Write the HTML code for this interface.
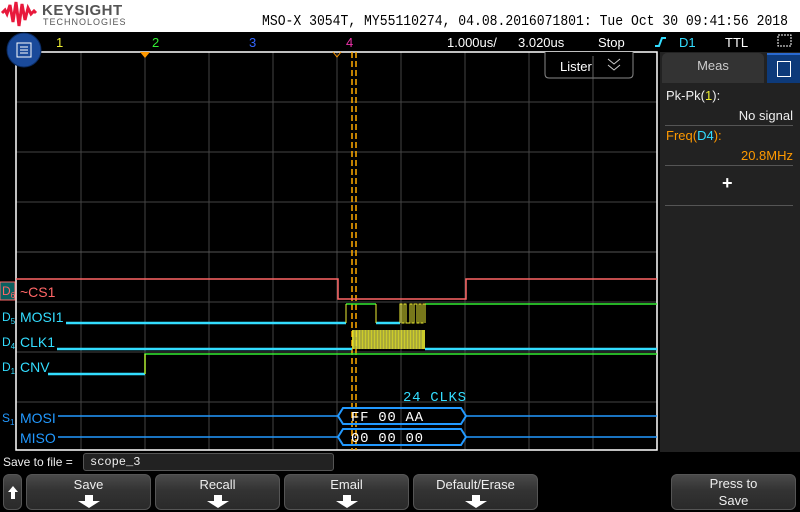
<!DOCTYPE html><html><head><style>
body{margin:0;width:800px;height:512px;background:#000;overflow:hidden;font-family:"Liberation Sans",sans-serif;position:relative}
.a{position:absolute}
.btn{position:absolute;top:474px;height:36px;background:linear-gradient(#4a4a4a,#333 45%,#2a2a2a);border:1px solid #555;border-radius:6px;box-sizing:border-box;color:#eee;font-size:13px;text-align:center;padding-top:2px}
.btn svg{position:absolute;left:50%;margin-left:-11px;top:20px}
</style></head><body>
<div class="a" style="left:0;top:0;width:800px;height:32px;background:#fff"></div>
<svg class="a" style="left:0;top:0" width="800" height="512">
<path d="M2,13 L5,10 L7,14 L10,5 L13,22 L16,2 L19,26 L22,4 L25,20 L28,8 L31,14 L34,11 L36,13" stroke="#e8193c" stroke-width="3" fill="none"/>
<text x="42" y="15" font-size="15" font-weight="bold" fill="#555" letter-spacing="0.5">KEYSIGHT</text>
<text x="43" y="25" font-size="9" fill="#555" letter-spacing="1">TECHNOLOGIES</text>
<text x="262" y="25" font-size="15" fill="#000" font-family="Liberation Mono" textLength="526" lengthAdjust="spacingAndGlyphs">MSO-X 3054T, MY55110274, 04.08.2016071801: Tue Oct 30 09:41:56 2018</text>
<text x="56" y="47" font-size="13" fill="#ee3">1</text>
<text x="152" y="47" font-size="13" fill="#3e3">2</text>
<text x="249" y="47" font-size="13" fill="#36f">3</text>
<text x="346" y="47" font-size="13" fill="#e3a">4</text>
<text x="447" y="47" font-size="13" fill="#fff">1.000us/</text>
<text x="518" y="47" font-size="13" fill="#fff">3.020us</text>
<text x="598" y="47" font-size="13" fill="#fff">Stop</text>
<path d="M655,46 h4 l3,-8 h4" stroke="#3df" stroke-width="2" fill="none"/>
<text x="679" y="47" font-size="13" fill="#3df">D1</text>
<text x="725" y="47" font-size="13" fill="#fff">TTL</text>
<rect x="778" y="35" width="13" height="11" fill="none" stroke="#fff" stroke-dasharray="2,1"/>
<g stroke="#444" stroke-width="1">
<path d="M81,52V450M145,52V450M209,52V450M273,52V450M401,52V450M465,52V450M529,52V450M593,52V450M337,52V450"/>
<path d="M16,102H657M16,152H657M16,202H657M16,302H657M16,352H657M16,402H657"/>
</g>
<path d="M16,252H657" stroke="#555"/>
<path d="M16,52H657V450H16Z" stroke="#fff" fill="none" stroke-width="1.5"/>
<path d="M140,52l5,6l5,-6z" fill="#f90"/>
<path d="M333,52l4,5l4,-5" stroke="#f90" fill="none"/>
<path d="M352,52V450M356,52V450" stroke="#fa0" stroke-width="1.5" stroke-dasharray="6,3"/>
<path d="M545,52V74q0,4 4,4h80q4,0 4,-4V52" fill="#000" stroke="#888"/>
<text x="560" y="71" font-size="13" fill="#fff">Lister</text>
<path d="M593,56V78" stroke="#666"/>
<path d="M608,59l6,5l6,-5M608,65l6,5l6,-5" stroke="#ccc" fill="none"/>
<rect x="0" y="282" width="15" height="18" fill="#0a6060" stroke="#f66"/>
<text x="2" y="295" font-size="12" fill="#f66">D<tspan font-size="8" dy="3">6</tspan></text>
<text x="2" y="321" font-size="12" fill="#3df">D<tspan font-size="8" dy="3">5</tspan></text>
<text x="2" y="346" font-size="12" fill="#3df">D<tspan font-size="8" dy="3">4</tspan></text>
<text x="2" y="371" font-size="12" fill="#3df">D<tspan font-size="8" dy="3">1</tspan></text>
<text x="2" y="422" font-size="12" fill="#29f">S<tspan font-size="8" dy="3">1</tspan></text>
<g font-size="14">
<text x="20" y="297" fill="#f66">~CS1</text>
<text x="20" y="322" fill="#3df">MOSI1</text>
<text x="20" y="347" fill="#3df">CLK1</text>
<text x="20" y="372" fill="#3df">CNV</text>
<text x="20" y="423" fill="#29f">MOSI</text>
<text x="20" y="443" fill="#29f">MISO</text>
<text x="403" y="401" fill="#3df" font-family="Liberation Mono" textLength="63">24 CLKS</text>
</g>
<path d="M16,279H338V299H466V279H657" stroke="#f66" stroke-width="1.5" fill="none"/>
<path d="M66,323H346M376,323H400" stroke="#3df" stroke-width="2.5"/>
<path d="M346,304H376M425,304H657" stroke="#3e3" stroke-width="1.5"/>
<path d="M346,323V304M376,304V323M400,323v-19h2v19h2v-19h2v19h4v-19h2v19h2v-19h3v19h2v-19h2v19h2v-19h2v19" stroke="#ee3" fill="none"/>
<path d="M57,349H352M425,349H657" stroke="#3df" stroke-width="2.5"/>
<rect x="352" y="330" width="73" height="19" fill="#ee3" opacity="0.85"/>
<path d="M355,330v19M358,330v19M361,330v19M364,330v19M367,330v19M370,330v19M373,330v19M376,330v19M379,330v19M382,330v19M385,330v19M388,330v19M391,330v19M394,330v19M397,330v19M400,330v19M403,330v19M406,330v19M409,330v19M412,330v19M415,330v19M418,330v19M421,330v19" stroke="#884" stroke-width="1"/>
<path d="M48,374H145" stroke="#3df" stroke-width="2.5"/>
<path d="M145,374V354H657" stroke="#3e3" stroke-width="1.5" fill="none"/>
<path d="M145,374V354" stroke="#ee3"/>
<path d="M58,416H338M466,416H657M58,437H338M466,437H657" stroke="#29f" stroke-width="1.5"/>
<path d="M338,416l5,-8h118l5,8l-5,8h-118z M338,437l5,-8h118l5,8l-5,8h-118z" stroke="#29f" stroke-width="2" fill="none"/>
<g font-family="Liberation Mono" font-size="14" fill="#fff">
<text x="351" y="421" textLength="72">FF 00 AA</text><text x="351" y="442" textLength="72">00 00 00</text></g>
<circle cx="24" cy="50" r="17" fill="#1a4a9a" stroke="#0a2a60"/>
<rect x="17" y="43" width="14" height="14" fill="none" stroke="#fff"/>
<path d="M20,47h8M20,50h8M20,53h8" stroke="#fff"/>
</svg>
<div class="a" style="left:660px;top:52px;width:140px;height:400px;background:#222"></div>
<div class="a" style="left:662px;top:53px;width:102px;height:30px;background:#333;border-radius:5px 5px 0 0;color:#ccc;font-size:13px;text-align:center;line-height:26px">Meas</div>
<div class="a" style="left:767px;top:53px;width:33px;height:30px;background:#0d3a7a;border-top:2px solid #2a6ad0;box-sizing:border-box"><div style="margin:6px 0 0 10px;width:12px;height:14px;border:1px solid #fff"></div></div>
<div class="a" style="left:666px;top:88px;color:#eee;font-size:13px">Pk-Pk(<span style="color:#ee3">1</span>):</div>
<div class="a" style="right:7px;top:108px;color:#eee;font-size:13px">No signal</div>
<div class="a" style="left:665px;top:125px;width:128px;height:1px;background:#555"></div>
<div class="a" style="left:666px;top:128px;color:#f90;font-size:13px">Freq(<span style="color:#3df">D4</span>):</div>
<div class="a" style="right:7px;top:148px;color:#f90;font-size:13px">20.8MHz</div>
<div class="a" style="left:665px;top:165px;width:128px;height:1px;background:#555"></div>
<div class="a" style="left:722px;top:173px;color:#fff;font-size:18px;font-weight:bold">+</div>
<div class="a" style="left:665px;top:205px;width:128px;height:1px;background:#555"></div>
<div class="a" style="left:3px;top:455px;color:#eee;font-size:12px">Save to file =</div>
<div class="a" style="left:83px;top:453px;width:251px;height:18px;background:#222;border:1px solid #555;border-radius:3px;box-sizing:border-box;color:#eee;font-size:12px;padding-left:6px;line-height:16px;font-family:'Liberation Mono'">scope_3</div>
<div class="btn" style="left:3px;width:19px"><svg width="10" height="14" style="left:4px;margin:0;top:11px"><path d="M5,0L10,6H7V13H3V6H0Z" fill="#fff"/></svg></div>
<div class="btn" style="left:26px;width:125px">Save<svg width="22" height="13"><path d="M7,0H15V6H22L11,13L0,6H7Z" fill="#fff"/></svg></div>
<div class="btn" style="left:155px;width:125px">Recall<svg width="22" height="13"><path d="M7,0H15V6H22L11,13L0,6H7Z" fill="#fff"/></svg></div>
<div class="btn" style="left:284px;width:125px">Email<svg width="22" height="13"><path d="M7,0H15V6H22L11,13L0,6H7Z" fill="#fff"/></svg></div>
<div class="btn" style="left:413px;width:125px">Default/Erase<svg width="22" height="13"><path d="M7,0H15V6H22L11,13L0,6H7Z" fill="#fff"/></svg></div>
<div class="btn" style="left:671px;width:125px;line-height:17px;padding-top:0">Press to<br>Save</div>
</body></html>
